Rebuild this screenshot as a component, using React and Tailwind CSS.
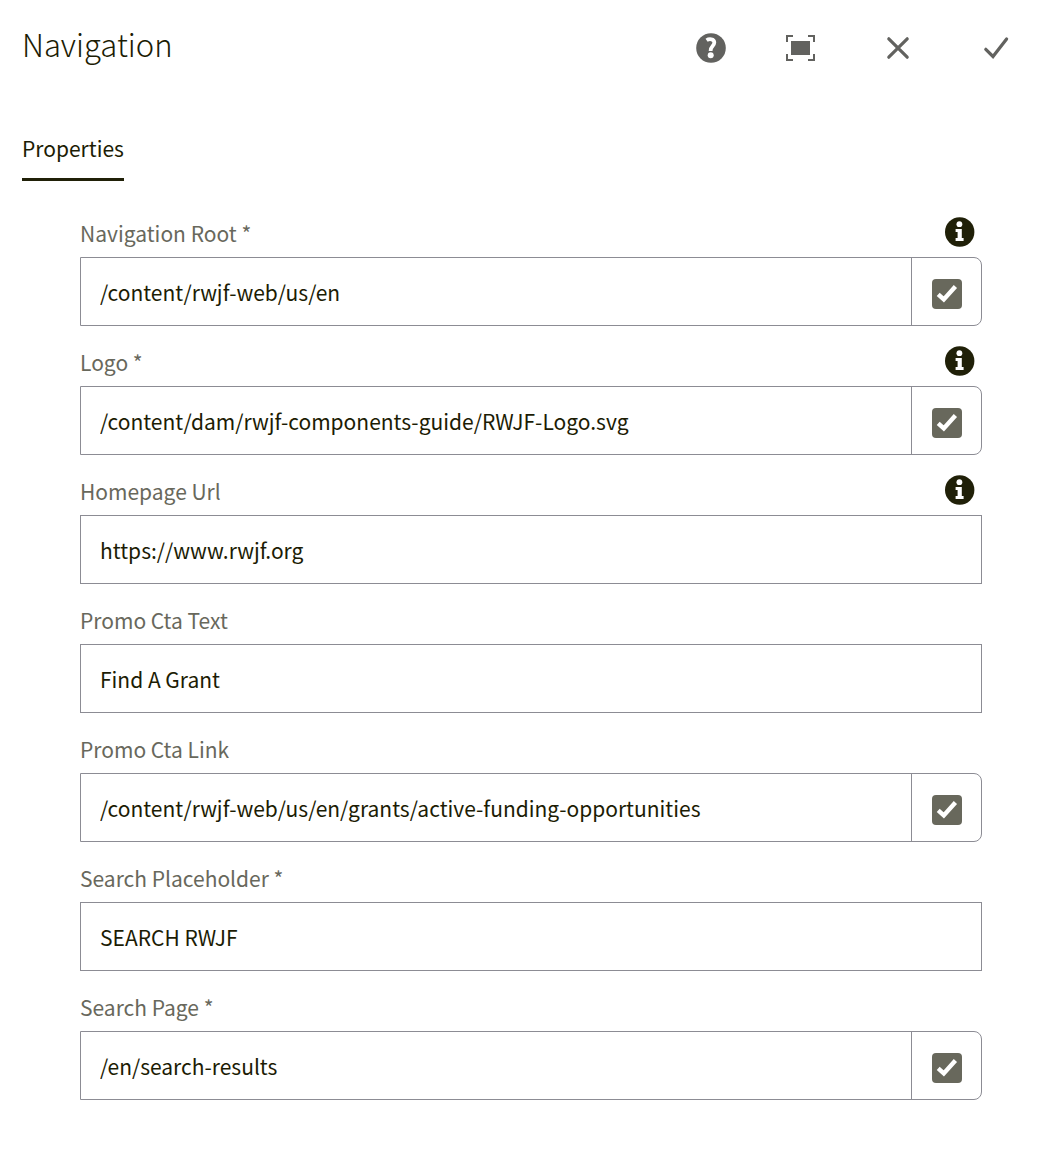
import { useState } from 'react';

const fields = [
  { id: 'navigation-root', label: 'Navigation Root *', value: '/content/rwjf-web/us/en', info: true, picker: true },
  { id: 'logo', label: 'Logo *', value: '/content/dam/rwjf-components-guide/RWJF-Logo.svg', info: true, picker: true },
  { id: 'homepage-url', label: 'Homepage Url', value: 'https://www.rwjf.org', info: true },
  { id: 'promo-cta-text', label: 'Promo Cta Text', value: 'Find A Grant' },
  { id: 'promo-cta-link', label: 'Promo Cta Link', value: '/content/rwjf-web/us/en/grants/active-funding-opportunities', picker: true },
  { id: 'search-placeholder', label: 'Search Placeholder *', value: 'SEARCH RWJF' },
  { id: 'search-page', label: 'Search Page *', value: '/en/search-results', picker: true },
];

const HelpIcon = () => (
  <svg className="size-[30px]" viewBox="0 0 30 30" fill="none" aria-hidden="true">
    <circle cx="15" cy="15" r="14.8" fill="currentColor" />
    <path d="M10.6 7.3C13 5.6 18.3 5.6 18.3 9.6C18.3 13 14.4 13.2 14.6 18" stroke="#fff" strokeWidth="3.8" />
    <circle cx="14.7" cy="22.2" r="3" fill="#fff" />
  </svg>
);

const FullscreenIcon = () => (
  <svg className="size-[30px]" viewBox="0 0 30 30" fill="none" aria-hidden="true">
    <path d="M2 9V3H8M23 3H29V9M29 21V27H23M8 27H2V21" stroke="currentColor" strokeWidth="2" />
    <rect x="6" y="8" width="19" height="14" fill="currentColor" />
  </svg>
);

const CloseIcon = () => (
  <svg className="size-[30px]" viewBox="0 0 30 30" fill="none" aria-hidden="true">
    <path d="M5.8 5.8L24.2 24.2M24.2 5.8L5.8 24.2" stroke="currentColor" strokeWidth="3.2" strokeLinecap="round" />
  </svg>
);

const DoneIcon = () => (
  <svg className="size-[30px]" viewBox="0 0 30 30" fill="none" aria-hidden="true">
    <path d="M4.8 16.3L12 23.5L25.6 6" stroke="currentColor" strokeWidth="3.2" strokeLinecap="round" />
  </svg>
);

const InfoIcon = () => (
  <svg className="size-[30px]" viewBox="0 0 30 30" aria-hidden="true">
    <circle cx="14.7" cy="15" r="14.7" fill="currentColor" />
    <circle cx="14.4" cy="7.2" r="2.9" fill="#fff" />
    <path d="M10.6 12H16.8V21H18.6V24H10.6V21H12.6V15H10.6Z" fill="#fff" />
  </svg>
);

const SelectIcon = () => (
  <svg className="size-[30px]" viewBox="0 0 30 30" fill="none" aria-hidden="true">
    <rect width="30" height="30" rx="4" fill="currentColor" />
    <path d="M6.2 15.4L11.8 20.4L23.4 7.6" stroke="#fff" strokeWidth="4.4" />
  </svg>
);

const ActionButton = ({ label, className, children }) => (
  <button type="button" aria-label={label} className={`flex h-12 items-center justify-center ${className}`}>
    {children}
  </button>
);

function Field({ id, label, value, info, picker }) {
  const [text, setText] = useState(value);

  return (
    <div className="pb-px">
      <div className="flex h-[59px] items-end justify-between pr-[7px] pb-[10px]">
        <label htmlFor={id} className="text-[21px] leading-7 text-[#68685c]">{label}</label>
        {info && (
          <button type="button" aria-label={`About ${label}`} className="text-[#202008]">
            <InfoIcon />
          </button>
        )}
      </div>
      <div className={`flex h-[69px] border border-[#8c8c94] ${picker ? 'rounded-r-lg' : ''}`}>
        <input
          id={id}
          type="text"
          value={text}
          onChange={(e) => setText(e.target.value)}
          className="min-w-0 flex-1 px-[19px] pt-0.5 text-[21px] text-[#1c1c04] outline-none"
        />
        {picker && (
          <button
            type="button"
            aria-label={`Select ${label}`}
            className="flex w-[70px] items-center justify-center border-l border-[#8c8c94] pt-1 text-[#68685c]"
          >
            <SelectIcon />
          </button>
        )}
      </div>
    </div>
  );
}

export default function App() {
  return (
    <div className="min-h-screen bg-white pb-14 font-['Noto_Sans_CJK_SC','Noto_Sans',sans-serif] text-[#1c1c04]">
      {/* Dialog header */}
      <header className="flex items-start justify-between pt-6 pr-[17px] pl-[22px]">
        <h1 className="text-[31px] leading-10 font-light">Navigation</h1>
        <div className="flex text-[#62625f]">
          <ActionButton label="Help" className="w-20"><HelpIcon /></ActionButton>
          <ActionButton label="Toggle fullscreen" className="w-[98px]"><FullscreenIcon /></ActionButton>
          <ActionButton label="Cancel" className="w-[98px]"><CloseIcon /></ActionButton>
          <ActionButton label="Done" className="w-[98px]"><DoneIcon /></ActionButton>
        </div>
      </header>

      <nav role="tablist" className="mt-[53px] flex px-[22px]">
        <button type="button" role="tab" aria-selected="true" className="h-14 border-b-3 border-[#202008] pb-2 text-[21px] leading-7">
          Properties
        </button>
      </nav>

      <form className="px-20 pt-[17px]" onSubmit={(e) => e.preventDefault()}>
        {fields.map((field) => (
          <Field key={field.id} {...field} />
        ))}
      </form>
    </div>
  );
}
